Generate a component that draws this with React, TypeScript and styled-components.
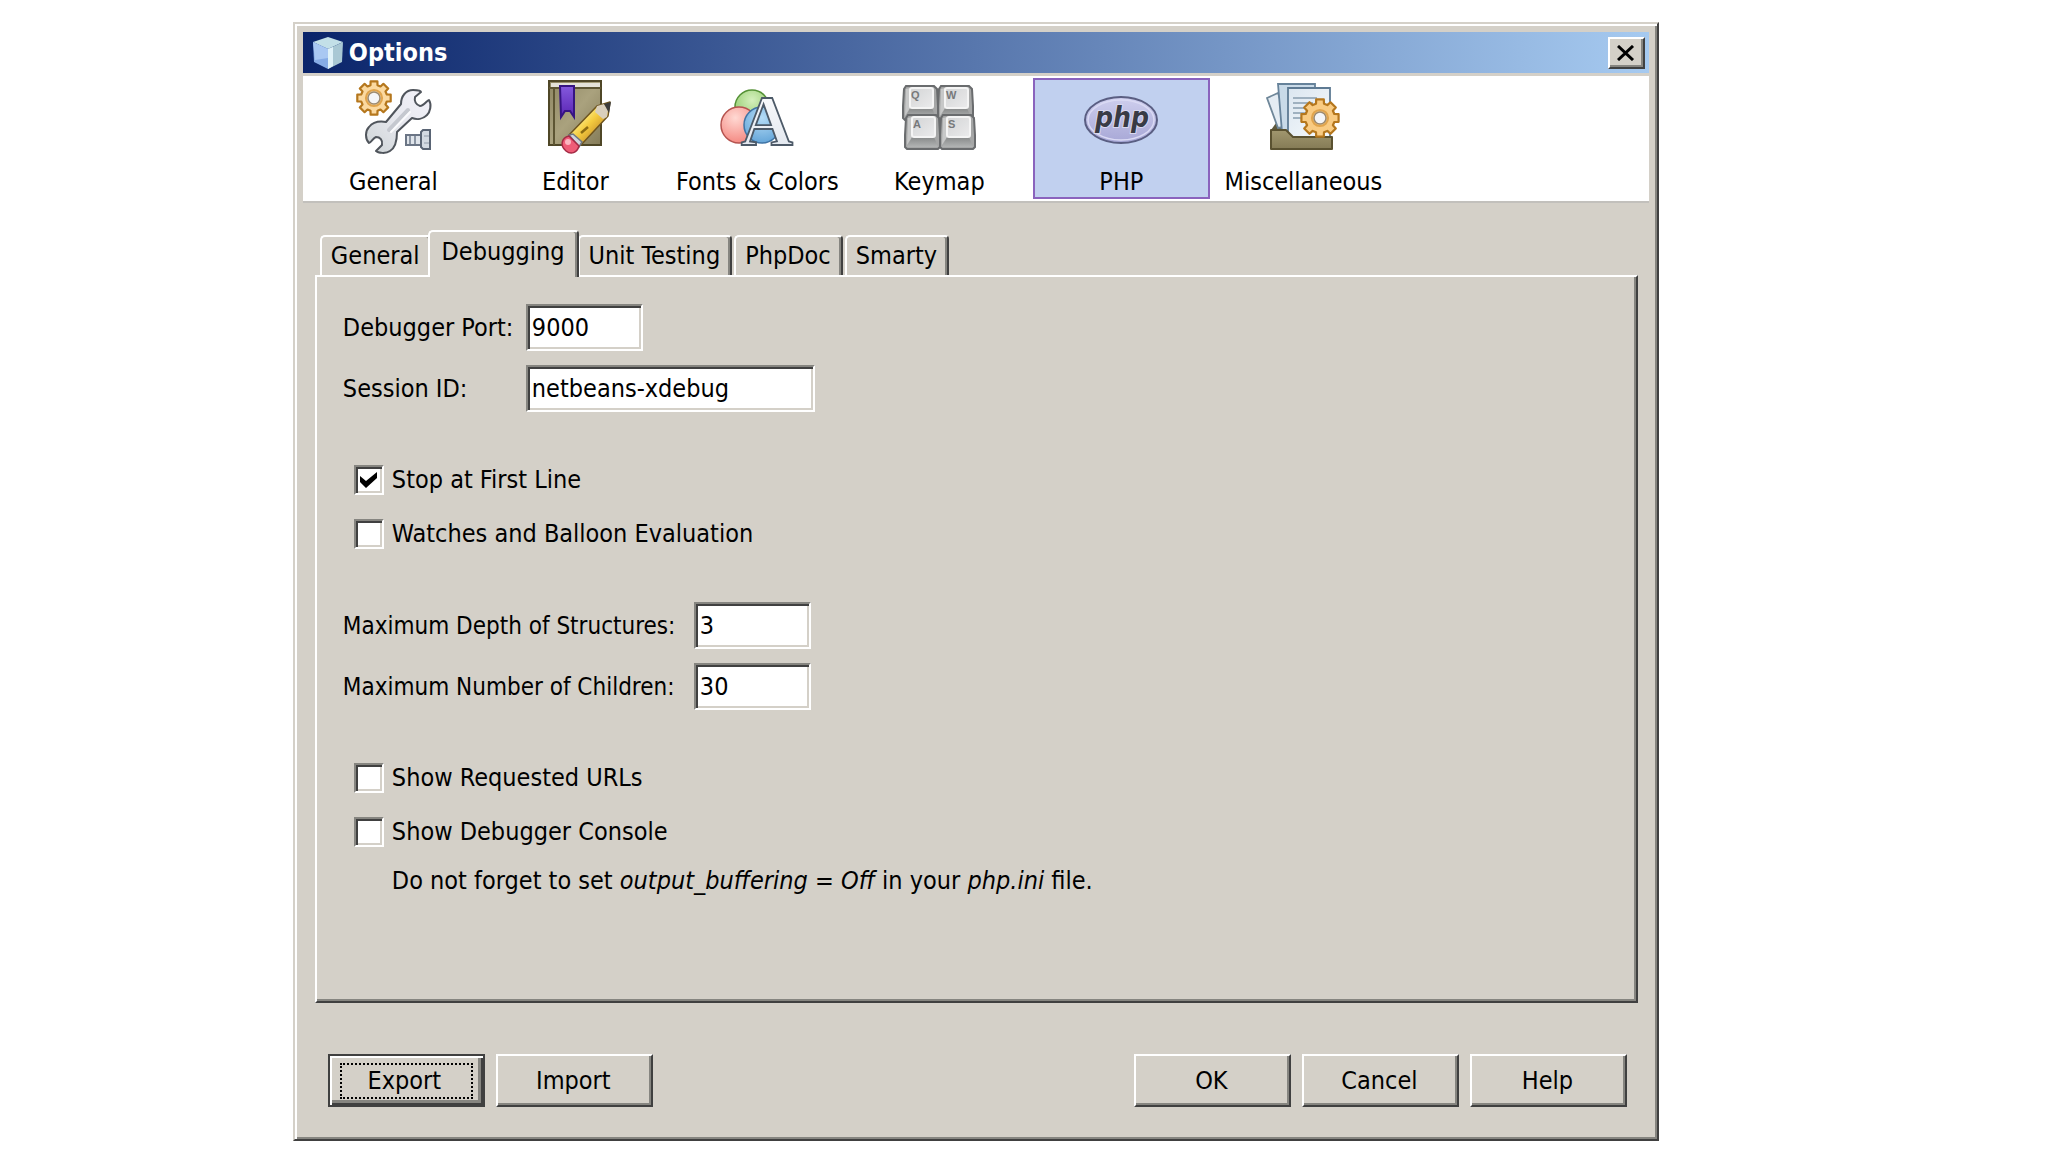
import React, { useState } from 'react';
import styled, { createGlobalStyle, css } from 'styled-components';

const face = '#d4d0c8';
const light = '#ffffff';
const shade = '#868580';
const dark = '#404040';
const ui = '"DejaVu Sans Condensed", "DejaVu Sans", Tahoma, sans-serif';

const GlobalStyle = createGlobalStyle`
  * { box-sizing: border-box; }
  body { margin: 0; background: #fff; color: #000; font: 25px/30px ${ui}; }
  button, input { font: inherit; color: inherit; }
`;

const raised = css`
  border: 2px solid;
  border-color: ${light} ${dark} ${dark} ${light};
  box-shadow: inset -2px -2px 0 ${shade};
`;

const sunken = css`
  border: 2px solid;
  border-color: ${shade} ${light} ${light} ${shade};
  box-shadow: inset 2px 2px 0 ${dark}, inset -2px -2px 0 ${face};
`;

const Page = styled.main`
  padding: 22px 19% 0 14.3%;
`;

const Dialog = styled.section`
  display: flex;
  flex-direction: column;
  padding: 8px;
  background: ${face};
  border: 2px solid;
  border-color: ${face} ${dark} ${dark} ${face};
  box-shadow: inset 2px 2px 0 ${light}, inset -2px -2px 0 ${shade};
`;

const TitleBar = styled.header`
  display: flex;
  align-items: center;
  gap: 5px;
  height: 41px;
  padding: 0 4px 0 9px;
  background: linear-gradient(90deg, #0a246a, #a6caf0);
`;

const Title = styled.h1`
  flex: 1;
  margin: 0;
  color: #fff;
  font-size: 25px;
  line-height: 30px;
  font-weight: 700;
`;

const CloseButton = styled.button`
  ${raised}
  display: grid;
  place-items: center;
  width: 37px;
  height: 32px;
  padding: 0;
  background: ${face};
`;

const Toolbar = styled.nav`
  display: flex;
  gap: 5px;
  margin-top: 3px;
  padding: 2px;
  background: #fff;
  border-bottom: 2px solid #c2c0bc;
`;

const Category = styled.button<{ $active: boolean }>`
  display: flex;
  flex-direction: column;
  align-items: center;
  gap: 12px;
  width: 177px;
  height: 121px;
  padding: 0;
  white-space: nowrap;
  border: 2px solid ${p => (p.$active ? '#8a63bd' : 'transparent')};
  background: ${p => (p.$active ? '#c1d0ef' : 'transparent')};
`;

const Body = styled.div`
  padding: 27px 11px 0 12px;
`;

const TabList = styled.div`
  display: flex;
  align-items: flex-end;
  gap: 2px;
  padding-left: 5px;
`;

const Tab = styled.button<{ $active: boolean }>`
  ${raised}
  height: 40px;
  padding: 0 10px 0 9px;
  border-bottom: 0;
  border-radius: 5px 4px 0 0;
  box-shadow: inset -2px 0 0 ${shade};
  background: ${face};
  ${p =>
    p.$active &&
    css`
      position: relative;
      height: 47px;
      margin: 0 -3px -2px -6px;
      padding: 0 12px 6px;
    `}
`;

const Panel = styled.div`
  ${raised}
  display: flex;
  flex-direction: column;
  gap: 53px;
  min-height: 728px;
  padding: 27px 26px;
`;

const Label = styled.label`
  white-space: nowrap;
`;

const Fields = styled.div<{ $label: number; $dense?: boolean }>`
  display: grid;
  grid-template-columns: ${p => p.$label}px 1fr;
  gap: 14px 0;
  align-items: center;
  ${Label} { font-size: ${p => (p.$dense ? 24 : 25)}px; }
`;

const TextField = styled.input<{ $wide?: boolean }>`
  ${sunken}
  width: ${p => (p.$wide ? 289 : 117)}px;
  height: 47px;
  padding: 0 4px;
  background: #fff;
  border-radius: 0;
  outline: 0;
`;

const Checks = styled.div`
  display: flex;
  flex-direction: column;
  gap: 24px;
  padding-left: 11px;
`;

const Check = styled.label`
  display: flex;
  align-items: center;
  gap: 8px;
  height: 30px;
`;

const Box = styled.span`
  display: grid;
  width: 30px;
  height: 30px;
  > * { grid-area: 1 / 1; }
  input {
    ${sunken}
    appearance: none;
    width: 30px;
    height: 30px;
    margin: 0;
    background: #fff;
  }
  svg { display: none; place-self: center; pointer-events: none; z-index: 1; }
  input:checked + svg { display: block; }
`;

const Hint = styled.p`
  margin: -5px 0 0 38px;
`;

const Footer = styled.footer`
  display: flex;
  gap: 11px;
  padding: 51px 22px 24px 25px;
`;

const Spacer = styled.div`
  flex: 1;
`;

const PushButton = styled.button<{ $default?: boolean }>`
  ${raised}
  width: 157px;
  height: 53px;
  padding: 0 2px 0 0;
  background: ${face};
  ${p =>
    p.$default &&
    css`
      display: grid;
      padding: 7px 10px 6px;
      border-color: ${dark};
      box-shadow: inset 2px 2px 0 ${light}, inset -2px -2px 0 ${dark}, inset -5px -5px 0 ${shade};
    `}
`;

const FocusRing = styled.span`
  display: grid;
  place-items: center;
  border: 2px dotted #000;
  padding-right: 4px;
`;

function gear(cx: number, cy: number, r: number, root: number) {
  const pts: string[] = [];
  for (let i = 0; i < 8; i++) {
    const a = (i * Math.PI) / 4;
    [[-0.27, root], [-0.2, r], [0.2, r], [0.27, root]].forEach(([d, q]) =>
      pts.push(`${(cx + q * Math.sin(a + d)).toFixed(1)} ${(cy - q * Math.cos(a + d)).toFixed(1)}`)
    );
  }
  return `M${pts.join('L')}Z`;
}

const Gear = ({ cx, cy, r, hole, fill }: { cx: number; cy: number; r: number; hole: number; fill: string }) => (
  <g strokeWidth="2.2" stroke="#b5771d" strokeLinejoin="round">
    <path d={gear(cx, cy, r, r * 0.78)} fill={fill} />
    <circle cx={cx} cy={cy} r={hole + 2} fill="none" stroke="#e0a44d" />
    <circle cx={cx} cy={cy} r={hole} fill="#f4f5f7" stroke="#9c8a70" strokeWidth="1.5" />
  </g>
);

const Icon = ({ children }: { children: React.ReactNode }) => (
  <svg width="75" height="75" viewBox="0 0 75 75" aria-hidden="true" overflow="visible">{children}</svg>
);

const GeneralIcon = () => (
  <Icon>
    <defs>
      <linearGradient id="wrench" x1="1" y1="0" x2="0" y2="1">
        <stop offset="0" stopColor="#f4f3fa" />
        <stop offset=".5" stopColor="#e7e8ee" />
        <stop offset="1" stopColor="#cdd3d5" />
      </linearGradient>
    </defs>
    <Gear cx={18} cy={18} r={17} hole={6} fill="#fbd9a0" />
    <path
      d="M45 24C45 16 50 10 57 10C61 10 65 11 65 12L59 17C58 21 60 25 64 26C68 26 71 20 73 20C76 25 74 32 71 35C67 39 61 40 56 38L41 52C41 60 39 68 34 71C30 74 22 73 20 71L26 65C27 60 24 57 20 57C17 58 15 63 13 63C9 59 9 51 13 47C17 42 24 41 30 42Z"
      fill="url(#wrench)" stroke="#50555c" strokeWidth="2" strokeLinejoin="round" />
    <path d="M33 50L52 30" stroke="#c5c8cf" strokeWidth="4" strokeLinecap="round" />
    <path d="M35 52L54 32" stroke="#fafafc" strokeWidth="2" strokeLinecap="round" />
    <rect x="50" y="55" width="15" height="10" fill="#dfe4ea" stroke="#6b7585" strokeWidth="2" />
    <path d="M54 56V64M59 56V64" stroke="#8a94a2" strokeWidth="2" />
    <path d="M65 52L67 50H74V69H67L65 67Z" fill="#d3dae2" stroke="#596474" strokeWidth="2" />
    <path d="M68 56H73M68 63H73" stroke="#a8b1bd" strokeWidth="1.5" />
  </Icon>
);

const EditorIcon = () => (
  <Icon>
    <defs>
      <linearGradient id="cover" x1="0" y1="0" x2="1" y2="1">
        <stop offset="0" stopColor="#8f8763" />
        <stop offset=".5" stopColor="#aaa27e" />
        <stop offset="1" stopColor="#857c59" />
      </linearGradient>
      <linearGradient id="ribbon" x1="0" y1="0" x2="0" y2="1">
        <stop offset="0" stopColor="#8459dd" />
        <stop offset="1" stopColor="#5a25b4" />
      </linearGradient>
      <linearGradient id="pencil" x1="0" y1="0" x2="1" y2="1">
        <stop offset=".3" stopColor="#fff08a" />
        <stop offset=".5" stopColor="#f4cb3f" />
        <stop offset=".75" stopColor="#c8902a" />
      </linearGradient>
    </defs>
    <rect x="11" y="1" width="52" height="64" fill="url(#cover)" stroke="#4f4727" strokeWidth="2" />
    <path d="M13 3H62V7H13Z" fill="#e4e2d8" />
    <path d="M11 8H63M16 8V65" stroke="#5d5533" strokeWidth="2" fill="none" />
    <path d="M22 6H36V37L32 31H27L23 37Z" fill="url(#ribbon)" stroke="#361482" strokeWidth="2" />
    <path d="M59 26L72 22L70 36L43 65L31 55Z" fill="url(#pencil)" stroke="#6d5420" strokeWidth="1.5" strokeLinejoin="round" />
    <path d="M59 26L66 24L70 30L69 37L65 39L57 32Z" fill="#d9cfbc" />
    <path d="M66 24L73 22L71 33Z" fill="#3c3c3c" />
    <path d="M43 53L50 47" stroke="#8b6b12" strokeWidth="2.5" />
    <path d="M31 55L35 54L44 62L41 67Z" fill="#cfd4dc" stroke="#6f7782" strokeWidth="1.5" />
    <path d="M31 56L41 66C39 73 33 75 28 71C22 66 23 58 31 56Z" fill="#ee5c77" stroke="#a32a44" strokeWidth="1.5" />
    <circle cx="30" cy="62" r="3" fill="#fbb5c0" />
  </Icon>
);

const FontsIcon = () => (
  <Icon>
    <defs>
      <radialGradient id="green" cx=".5" cy=".3" r=".7"><stop offset="0" stopColor="#d5f0bd" /><stop offset="1" stopColor="#8cc866" /></radialGradient>
      <radialGradient id="red" cx=".4" cy=".3" r=".7"><stop offset="0" stopColor="#ffd9d3" /><stop offset="1" stopColor="#f58a83" /></radialGradient>
      <radialGradient id="blue" cx=".5" cy=".3" r=".7"><stop offset="0" stopColor="#b5dcf6" /><stop offset="1" stopColor="#65a6d9" /></radialGradient>
      <linearGradient id="letter" x1="0" y1="0" x2="0" y2="1"><stop offset="0" stopColor="#ffffff" /><stop offset="1" stopColor="#dde3ec" /></linearGradient>
    </defs>
    <circle cx="32" cy="27" r="17" fill="url(#green)" stroke="#559136" strokeWidth="1.5" />
    <circle cx="19" cy="45" r="18" fill="url(#red)" stroke="#b5534f" strokeWidth="1.5" />
    <circle cx="42" cy="45" r="18" fill="url(#blue)" stroke="#3f74a5" strokeWidth="1.5" />
    <text x="47" y="65" textAnchor="middle" fontFamily="Liberation Serif, serif" fontWeight="700" fontSize="72"
      fill="url(#letter)" stroke="#4d5a68" strokeWidth="1.8">A</text>
  </Icon>
);

const Key = ({ x, y, c }: { x: number; y: number; c: string }) => (
  <g>
    <path d={`M${x + 3} ${y}H${x + 31}L${x + 34} ${y + 3}L${x + 35} ${y + 20}V${y + 32}L${x + 33} ${y + 34}H${x + 2}L${x} ${y + 32}V${y + 20}L${x + 1} ${y + 3}Z`}
      fill="#a5a6a6" stroke="#6a6c6e" strokeWidth="2" />
    <path d={`M${x + 7} ${y + 22}H${x + 29}L${x + 33} ${y + 32}H${x + 2}Z`} fill="url(#keySide)" />
    <path d={`M${x + 3} ${y + 3}L${x + 7} ${y + 2}V${y + 22}L${x + 2} ${y + 30}Z`} fill="#c7c8c8" />
    <rect x={x + 7} y={y + 2} width="23" height="20" rx="2" fill="url(#keyTop)" stroke="#f4f4f4" strokeWidth="2" />
    <text x={x + 8} y={y + 13} fontFamily="Liberation Sans, sans-serif" fontSize="11" fontWeight="700" fill="#77797b">{c}</text>
  </g>
);

const KeymapIcon = () => (
  <Icon>
    <defs>
      <linearGradient id="keySide" x1="0" y1="0" x2="0" y2="1"><stop offset="0" stopColor="#868888" /><stop offset="1" stopColor="#b2b4b4" /></linearGradient>
      <linearGradient id="keyTop" x1="0" y1="0" x2="1" y2="1"><stop offset="0" stopColor="#d3d4d5" /><stop offset="1" stopColor="#ebebec" /></linearGradient>
    </defs>
    <Key x={1} y={6} c="Q" />
    <Key x={36} y={6} c="W" />
    <Key x={3} y={35} c="A" />
    <Key x={38} y={35} c="S" />
  </Icon>
);

const PhpIcon = () => (
  <Icon>
    <defs>
      <linearGradient id="oval" x1="0" y1="0" x2="0" y2="1"><stop offset="0" stopColor="#cfcfee" /><stop offset="1" stopColor="#a7a7d6" /></linearGradient>
    </defs>
    <ellipse cx="37" cy="40" rx="36" ry="23" fill="url(#oval)" stroke="#5a5e82" strokeWidth="2" />
    <ellipse cx="37" cy="40" rx="33" ry="20" fill="none" stroke="#dadaf4" strokeWidth="1.5" />
    <text x="38" y="47" textAnchor="middle" fontFamily={ui} fontSize="28" fontWeight="700" fontStyle="italic"
      fill="#393b45" stroke="#d9d9f0" strokeWidth="2" paintOrder="stroke">php</text>
  </Icon>
);

const MiscIcon = () => (
  <Icon>
    <defs>
      <linearGradient id="paper" x1="0" y1="0" x2="1" y2="1"><stop offset="0" stopColor="#dbe6f0" /><stop offset="1" stopColor="#f7fafc" /></linearGradient>
      <linearGradient id="tray" x1="0" y1="0" x2="0" y2="1"><stop offset="0" stopColor="#a1976f" /><stop offset="1" stopColor="#857b55" /></linearGradient>
    </defs>
    <path d="M5 50L10 43H19V52Z" fill="#5e583c" />
    <path d="M1 18L12 13L23 46L12 48Z" fill="#e4ecf3" stroke="#6f8799" strokeWidth="1.8" />
    <path d="M12 4H49V52H16Z" fill="#c9dae8" stroke="#66829a" strokeWidth="1.8" />
    <path d="M22 8H64V58H22Z" fill="url(#paper)" stroke="#5e7a93" strokeWidth="1.8" />
    <path d="M27 18H51M27 23H47M27 28H45M27 33H41M27 38H37" stroke="#9fb1c0" strokeWidth="2" />
    <path d="M5 50H20L27 57H66V69H5Z" fill="url(#tray)" stroke="#5a5130" strokeWidth="2" strokeLinejoin="round" />
    <Gear cx={54} cy={38} r={19} hole={6} fill="#f9cb82" />
  </Icon>
);

const CubeIcon = () => (
  <svg width="32" height="34" viewBox="0 0 32 34" aria-hidden="true">
    <path d="M16 1L31 6L16 13L1 6Z" fill="#c3e0e8" />
    <path d="M1 6L16 13V33L2 26Z" fill="#86ace6" />
    <path d="M1 6L16 13V22L3 24Z" fill="#a9c8f2" />
    <path d="M31 6L16 13V33L30 26Z" fill="#a9c8d4" />
    <path d="M16 13L21 11V30L16 33Z" fill="#e0f2f8" />
  </svg>
);

const categories = [
  { name: 'General', icon: <GeneralIcon /> },
  { name: 'Editor', icon: <EditorIcon /> },
  { name: 'Fonts & Colors', icon: <FontsIcon /> },
  { name: 'Keymap', icon: <KeymapIcon /> },
  { name: 'PHP', icon: <PhpIcon /> },
  { name: 'Miscellaneous', icon: <MiscIcon /> },
];

const tabs = ['General', 'Debugging', 'Unit Testing', 'PhpDoc', 'Smarty'];

const Field = ({ id, label, value, wide }: { id: string; label: string; value: string; wide?: boolean }) => (
  <>
    <Label htmlFor={id}>{label}</Label>
    <TextField id={id} defaultValue={value} $wide={wide} spellCheck={false} />
  </>
);

const CheckRow = ({ label, on = false }: { label: string; on?: boolean }) => (
  <Check>
    <Box>
      <input type="checkbox" defaultChecked={on} />
      <svg width="18" height="18" viewBox="0 0 18 18" aria-hidden="true">
        <path d="M0 5L6 10L17 1V7L6 17L0 11Z" fill="#000" />
      </svg>
    </Box>
    {label}
  </Check>
);

export default function App() {
  const [category, setCategory] = useState('PHP');
  const [tab, setTab] = useState('Debugging');
  return (
    <Page>
      <GlobalStyle />
      <Dialog role="dialog" aria-labelledby="title">
        <TitleBar>
          <CubeIcon />
          <Title id="title">Options</Title>
          <CloseButton aria-label="Close">
            <svg width="18" height="16" viewBox="0 0 18 16" aria-hidden="true">
              <path d="M1 1L16 15M16 1L1 15" stroke="#000" strokeWidth="3" />
            </svg>
          </CloseButton>
        </TitleBar>
        <Toolbar>
          {categories.map(c => (
            <Category key={c.name} $active={c.name === category} onClick={() => setCategory(c.name)}>
              {c.icon}
              {c.name}
            </Category>
          ))}
        </Toolbar>
        <Body>
          <TabList role="tablist">
            {tabs.map(t => (
              <Tab key={t} role="tab" aria-selected={t === tab} $active={t === tab} onClick={() => setTab(t)}>
                {t}
              </Tab>
            ))}
          </TabList>
          <Panel role="tabpanel">
            <Fields $label={183}>
              <Field id="port" label="Debugger Port:" value="9000" />
              <Field id="session" label="Session ID:" value="netbeans-xdebug" wide />
            </Fields>
            <Checks>
              <CheckRow label="Stop at First Line" on />
              <CheckRow label="Watches and Balloon Evaluation" />
            </Checks>
            <Fields $label={351} $dense>
              <Field id="depth" label="Maximum Depth of Structures:" value="3" />
              <Field id="children" label="Maximum Number of Children:" value="30" />
            </Fields>
            <Checks>
              <CheckRow label="Show Requested URLs" />
              <CheckRow label="Show Debugger Console" />
              <Hint>
                Do not forget to set <em>output_buffering = Off</em> in your <em>php.ini</em> file.
              </Hint>
            </Checks>
          </Panel>
        </Body>
        <Footer>
          <PushButton $default>
            <FocusRing>Export</FocusRing>
          </PushButton>
          <PushButton>Import</PushButton>
          <Spacer />
          <PushButton>OK</PushButton>
          <PushButton>Cancel</PushButton>
          <PushButton>Help</PushButton>
        </Footer>
      </Dialog>
    </Page>
  );
}
